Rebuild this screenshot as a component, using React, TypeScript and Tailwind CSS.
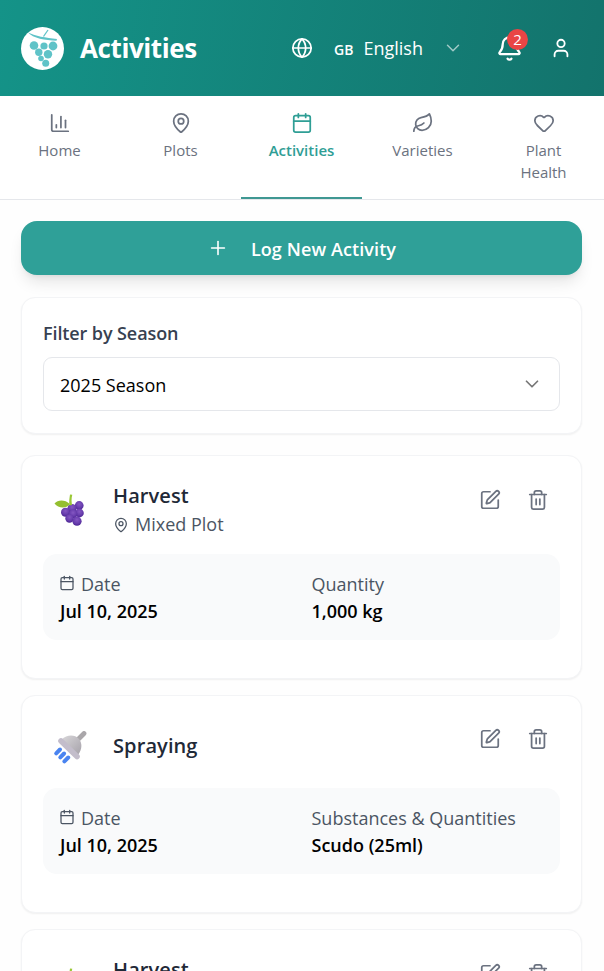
import React from 'react'
import {
  Bell,
  Calendar,
  ChartColumn,
  ChevronDown,
  Globe,
  Heart,
  Leaf,
  MapPin,
  Plus,
  SquarePen,
  Trash2,
  User,
  type LucideIcon,
} from 'lucide-react'

interface Tab {
  label: string
  icon: LucideIcon
  active?: boolean
}

interface Activity {
  type: 'harvest' | 'spraying'
  title: string
  plot?: string
  date: string
  detailLabel: string
  detailValue: string
}

const tabs: Tab[] = [
  { label: 'Home', icon: ChartColumn },
  { label: 'Plots', icon: MapPin },
  { label: 'Activities', icon: Calendar, active: true },
  { label: 'Varieties', icon: Leaf },
  { label: 'Plant Health', icon: Heart },
]

const activities: Activity[] = [
  {
    type: 'harvest',
    title: 'Harvest',
    plot: 'Mixed Plot',
    date: 'Jul 10, 2025',
    detailLabel: 'Quantity',
    detailValue: '1,000 kg',
  },
  {
    type: 'spraying',
    title: 'Spraying',
    date: 'Jul 10, 2025',
    detailLabel: 'Substances & Quantities',
    detailValue: 'Scudo (25ml)',
  },
]

const Logo = () => (
  <svg viewBox="0 0 43 43" className="h-[43px] w-[43px] shrink-0">
    <circle cx="21.5" cy="21.5" r="21.5" fill="#fff" />
    <path d="M6.5 5C14 9.5 25 10.5 36 12L35.5 13.8C24 12.8 12.5 12 6.5 5Z" fill="#5fc3c8" />
    <path d="M22.5 9.5L27 3" stroke="#5fc3c8" strokeWidth="1.3" fill="none" />
    <g fill="#5fc3c8">
      <circle cx="13" cy="18.5" r="4.3" />
      <circle cx="23" cy="19" r="3.6" />
      <circle cx="32" cy="19" r="4.4" />
      <circle cx="17.8" cy="25.3" r="3.7" />
      <circle cx="27" cy="27.2" r="4.2" />
      <circle cx="20" cy="31.5" r="2.8" />
      <circle cx="24.7" cy="36.3" r="3.5" />
    </g>
  </svg>
)

const GrapesIcon = () => (
  <svg viewBox="0 0 34 34" className="ml-0.5 mt-px h-[34px] w-[34px]">
    <defs>
      <radialGradient id="grape" cx="50%" cy="35%" r="65%">
        <stop offset="0" stopColor="#8457c2" />
        <stop offset="0.6" stopColor="#683dad" />
        <stop offset="1" stopColor="#4b2593" />
      </radialGradient>
    </defs>
    <g fill="url(#grape)">
      <circle cx="25.2" cy="12.5" r="4.4" />
      <circle cx="18" cy="15.5" r="4.6" />
      <circle cx="11.5" cy="19.2" r="4.5" />
      <circle cx="25.4" cy="20" r="4.4" />
      <circle cx="19" cy="21" r="4.4" />
      <circle cx="15.5" cy="25.5" r="4.2" />
      <circle cx="23" cy="28.2" r="4.6" />
    </g>
    <path d="M15.5 12.5C14.8 9 15.5 5 16 1.5L18.3 1.7C17.2 5.5 17.6 9 18 12Z" fill="#9ac836" />
    <path d="M0.5 10.5C4 6.5 11 6.5 15.8 11C12.5 15.8 4.5 15.8 0.5 10.5Z" fill="#94bf30" />
  </svg>
)

const ShowerIcon = () => (
  <svg viewBox="0 0 34 34" className="h-[34px] w-[34px]">
    <defs>
      <linearGradient id="steel" x1="0" y1="0" x2="1" y2="1">
        <stop offset="0" stopColor="#d9d7da" />
        <stop offset="1" stopColor="#a5a1a9" />
      </linearGradient>
    </defs>
    <path d="M26 7.5L31 2.5" stroke="#aaa7aa" strokeWidth="4.8" strokeLinecap="round" />
    <path d="M8.5 8.5C14 3 22 3.5 25.5 7.5C29.5 11.5 29.5 18 25 24Z" fill="url(#steel)" />
    <path d="M8 10L24 25.5" stroke="#c3bdcb" strokeWidth="5.6" strokeLinecap="round" />
    <g stroke="#4a84f0" strokeWidth="4" strokeLinecap="round">
      <path d="M7 18.5L3.2 22.3" />
      <path d="M11.1 22.5L7.3 26.3" />
      <path d="M15.2 26.5L11.4 30.3" />
    </g>
  </svg>
)

const Header = () => (
  <header className="flex h-24 items-center bg-[linear-gradient(100deg,#149388,#13736c)] pl-[21px] pr-[32px] text-white">
    <Logo />
    <h1 className="ml-4 mt-px text-[26px] font-bold tracking-[-0.4px]">Activities</h1>
    <div className="ml-auto flex items-center">
      <Globe size={22} strokeWidth={1.9} />
      <span className="ml-[21px] mt-[3px] text-[14px] font-semibold">GB</span>
      <span className="ml-[10px] text-[18px]">English</span>
      <ChevronDown size={22} strokeWidth={1.6} className="ml-[19px] opacity-60" />
      <div className="relative ml-[32px]">
        <Bell size={27} strokeWidth={2} />
        <span className="absolute -right-[5px] -top-[6px] flex h-[21px] w-[21px] items-center justify-center rounded-full bg-[#e94545] text-[15px]">
          2
        </span>
      </div>
      <User size={22} strokeWidth={2} className="ml-[27px]" />
    </div>
  </header>
)

const TabBar = () => (
  <nav className="border-b border-gray-200 bg-white">
    <div className="-ml-px grid h-[103px] grid-cols-5">
      {tabs.map(({ label, icon: Icon, active }) => (
        <button
          key={label}
          className={
            active
              ? 'flex flex-col items-center border-b-2 border-[#3f9893] px-6 pt-4 text-[#2f9e95]'
              : 'flex flex-col items-center px-6 pt-4 text-[#6b7280]'
          }
        >
          <Icon size={22} strokeWidth={1.9} />
          <span
            className={
              active
                ? 'mt-[5px] text-[15px] font-semibold leading-[22px]'
                : 'mt-[5px] text-[15px] leading-[22px]'
            }
          >
            {label}
          </span>
        </button>
      ))}
    </div>
  </nav>
)

const SeasonFilter = () => (
  <section className="mt-[22px] h-[137px] rounded-[14px] border border-[#f3f4f6] bg-white px-[21px] pt-[22px] shadow-[0_1px_2px_rgba(0,0,0,0.06)]">
    <p className="text-[18px] font-semibold leading-[26px] tracking-[-0.1px] text-[#374151]">
      Filter by Season
    </p>
    <button className="mt-[11px] flex h-[54px] w-full items-center justify-between rounded-[9px] border border-gray-200 px-4 text-[18px] text-black">
      <span className="pt-0.5">2025 Season</span>
      <ChevronDown size={22} strokeWidth={1.9} className="text-[#777]" />
    </button>
  </section>
)

const ActivityCard = ({ activity }: { activity: Activity }) => (
  <article className="rounded-[14px] border border-[#f3f4f6] bg-white px-[21px] pb-[38px] pt-[22px] shadow-[0_1px_2px_rgba(0,0,0,0.06)]">
    <div className={activity.plot ? 'flex h-[76px] pt-px' : 'flex h-[70px]'}>
      <div className="flex w-[54px] items-start justify-center pt-[13px]">
        {activity.type === 'harvest' ? <GrapesIcon /> : <ShowerIcon />}
      </div>
      <div className={activity.plot ? 'ml-4 pt-[3px]' : 'ml-4 pt-[14px]'}>
        <h3 className="text-[20px] font-semibold leading-[28px] tracking-[0.1px] text-[#1f2937]">
          {activity.title}
        </h3>
        {activity.plot && (
          <p className="flex items-center gap-[6px] text-[18px] leading-[29px] text-[#4b5563]">
            <MapPin size={16} strokeWidth={1.9} />
            {activity.plot}
          </p>
        )}
      </div>
      <div className="ml-auto flex gap-[26px] pr-[11px] pt-[10px] text-[#6b7280]">
        <SquarePen size={22} strokeWidth={1.9} />
        <Trash2 size={22} strokeWidth={1.9} />
      </div>
    </div>
    <div className="grid h-[86px] grid-cols-2 gap-x-4 rounded-[14px] bg-[#f9fafb] px-4 pt-[17px] text-[18px]">
      <div>
        <p className="flex items-center gap-[6px] leading-[27px] text-[#4b5563]">
          <Calendar size={16} strokeWidth={1.9} className="-mt-[3px]" />
          Date
        </p>
        <p className="pl-px font-semibold leading-[27px] text-black">{activity.date}</p>
      </div>
      <div className="pl-0.5">
        <p className="leading-[27px] text-[#4b5563]">{activity.detailLabel}</p>
        <p className="font-semibold leading-[27px] text-black">{activity.detailValue}</p>
      </div>
    </div>
  </article>
)

const App: React.FC = () => {
  return (
    <div className="h-[971px] overflow-hidden bg-[#fefefe] font-['Open_Sans',sans-serif]">
      <Header />
      <TabBar />
      <main className="pl-[21px] pr-[22px] pt-[21px]">
        <button className="flex h-[54px] w-full items-center justify-center gap-[22px] rounded-[16px] bg-[#2fa098] text-[18px] font-semibold text-white shadow-lg">
          <Plus size={22} strokeWidth={1.75} />
          <span className="pt-0.5 tracking-[0.1px]">Log New Activity</span>
        </button>
        <SeasonFilter />
        <div className="mt-[21px] flex flex-col gap-4">
          {[...activities, activities[0]].map((activity, index) => (
            <ActivityCard key={index} activity={activity} />
          ))}
        </div>
      </main>
    </div>
  )
}

export default App
